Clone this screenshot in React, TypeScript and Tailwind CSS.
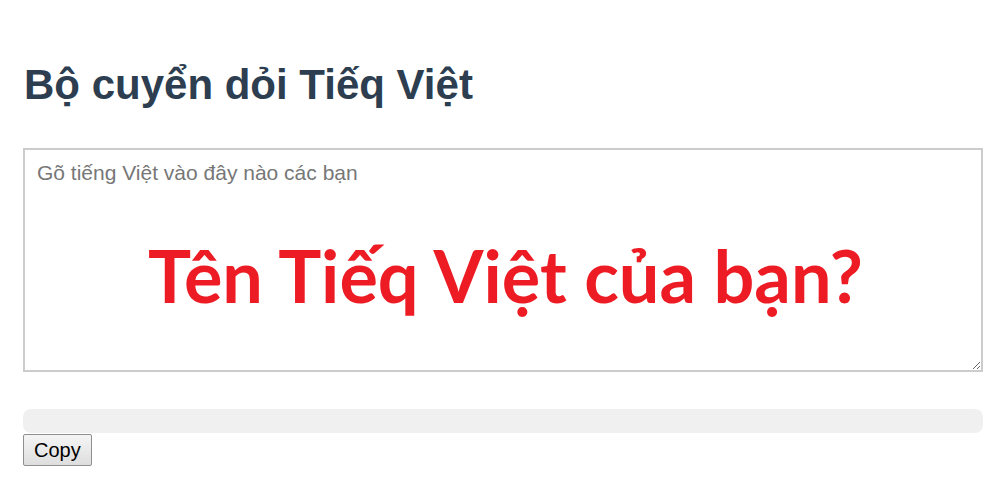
export default function App() {
  return (
    <div className="min-h-[485px] bg-white px-[23px] pt-[61px]" style={{ fontFamily: '"Liberation Sans", Arial, sans-serif' }}>
      <h1 className="pl-px text-[42px] font-bold leading-[48px] text-[#2c3e50]">Bộ cuyển dỏi Tiếq Việt</h1>
      <div className="relative mt-[39px] h-[224px]">
        <textarea
          className="block h-full w-[960px] resize border-2 border-[#cccccc] bg-white px-[12px] pb-[9px] pt-[11px] text-[21px] leading-[24px] text-[#555] outline-none placeholder:text-[#777]"
          placeholder="Gõ tiếng Việt vào đây nào các bạn"
        />
        <div className="pointer-events-none absolute left-[10px] right-0 top-[91px] flex justify-center">
          <span className="text-[72px] font-bold leading-none text-[#ed1c24]" style={{ fontFamily: 'Lato, "Open Sans", sans-serif' }}>
            Tên Tiếq Việt của bạn?
          </span>
        </div>
      </div>
      <div className="mt-[37px] h-[24px] w-[960px] rounded-[8px] bg-[#f0f0f0]" />
      <button className="mt-px h-[32px] rounded-[2px] border border-[#8f8f8f] bg-gradient-to-b from-[#f5f5f5] to-[#dedede] px-[10px] text-[20px] leading-none text-black">
        Copy
      </button>
    </div>
  );
}
